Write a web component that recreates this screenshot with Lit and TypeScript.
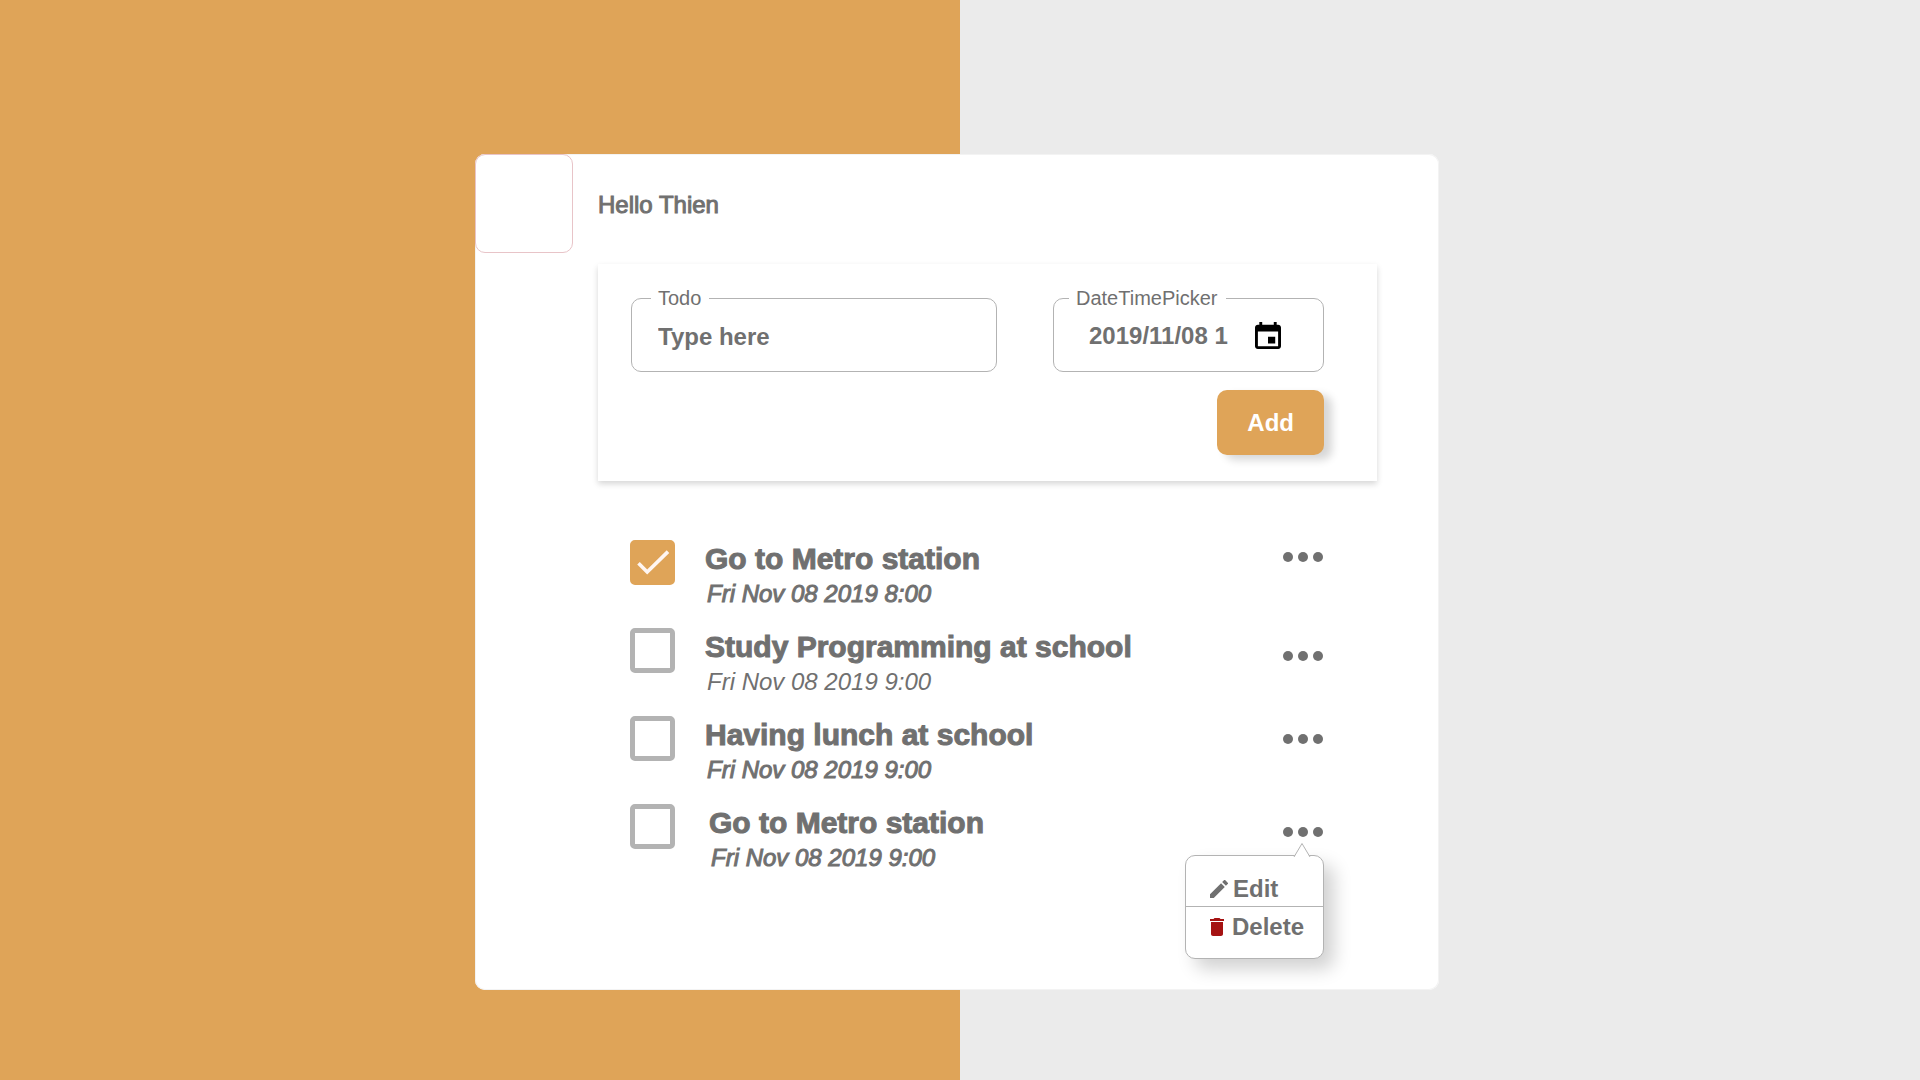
import { LitElement, html, css, svg, nothing } from "lit";
import { customElement, property, state } from "lit/decorators.js";
import { classMap } from "lit/directives/class-map.js";

interface Task {
  id: number;
  title: string;
  when: string;
  done: boolean;
  light?: boolean;
  menuAlign: "start" | "center" | "end";
}

const calendarPath = svg`<path d="M17 12h-5v5h5v-5zM16 1v2H8V1H6v2H5c-1.11 0-1.99.9-1.99 2L3 19c0 1.1.89 2 2 2h14c1.1 0 2-.9 2-2V5c0-1.1-.9-2-2-2h-1V1h-2zm3 18H5V8h14v11z"></path>`;
const pencilPath = svg`<path d="M3 17.25V21h3.75L17.81 9.94l-3.75-3.75L3 17.25zM20.71 7.04a1 1 0 0 0 0-1.41l-2.34-2.34a1 1 0 0 0-1.41 0l-1.83 1.83 3.75 3.75 1.83-1.83z"></path>`;
const trashPath = svg`<path d="M6 19c0 1.1.9 2 2 2h8c1.1 0 2-.9 2-2V7H6v12zM19 4h-3.5l-1-1h-5l-1 1H5v2h14V4z"></path>`;

@customElement("todo-menu")
export class TodoMenu extends LitElement {
  static styles = css`
    :host {
      display: block;
      color: #707070;
      font: bold 24px/28px "Liberation Sans", Arial, sans-serif;
    }
    .menu {
      position: relative;
      box-sizing: border-box;
      min-width: 139px;
      border: 1px solid #b3b3b3;
      border-radius: 10px;
      background: #fff;
      box-shadow: 10px 10px 18px rgba(0, 0, 0, 0.18);
    }
    .arrow {
      position: absolute;
      right: 12px;
      bottom: 100%;
      width: 18px;
      height: 14px;
      margin-bottom: -1px;
    }
    .item {
      display: flex;
      align-items: center;
      width: 100%;
      box-sizing: border-box;
      border: 0;
      background: none;
      color: inherit;
      font: inherit;
      text-align: left;
      cursor: pointer;
    }
    .edit {
      gap: 5px;
      padding: 19px 11px 3px 24px;
      border-bottom: 1px solid #b3b3b3;
    }
    .delete {
      gap: 8px;
      padding: 6px 11px 17px 24px;
    }
    .pencil {
      width: 18px;
      height: 18px;
      fill: #707070;
    }
    .trash {
      width: 14px;
      height: 18px;
      fill: #a51212;
    }
  `;

  render() {
    return html`
      <div class="menu">
        <svg class="arrow" viewBox="0 0 18 14" aria-hidden="true">
          <path d="M1 14 9 0.5 17 14" fill="#fff" stroke="#b3b3b3"></path>
        </svg>
        <button class="item edit" type="button">
          <svg class="pencil" viewBox="3 3 18 18" aria-hidden="true">${pencilPath}</svg>
          Edit
        </button>
        <button class="item delete" type="button">
          <svg class="trash" viewBox="5 3 14 18" aria-hidden="true">${trashPath}</svg>
          Delete
        </button>
      </div>
    `;
  }
}

@customElement("todo-item")
export class TodoItem extends LitElement {
  @property({ attribute: false }) task!: Task;
  @property({ type: Boolean }) open = false;

  static styles = css`
    :host {
      display: block;
      color: #707070;
      font-family: "Liberation Sans", Arial, sans-serif;
    }
    .row {
      display: flex;
      align-items: flex-start;
      gap: 30px;
    }
    .row.open {
      gap: 34px;
    }
    .check {
      display: grid;
      flex: none;
    }
    .box,
    .tick {
      grid-area: 1 / 1;
      width: 45px;
      height: 45px;
    }
    .box {
      appearance: none;
      box-sizing: border-box;
      margin: 0;
      border: 5px solid #b3b3b3;
      border-radius: 5px;
      background: #fff;
      cursor: pointer;
    }
    .box:checked {
      border-color: #dfa458;
      background: #dfa458;
    }
    .tick {
      pointer-events: none;
      fill: none;
      stroke: #fff6f2;
      stroke-width: 3.6;
    }
    .text {
      display: flex;
      flex-direction: column;
      gap: 2px;
      flex: 1;
    }
    .title {
      font-size: 30px;
      line-height: 38px;
      font-weight: bold;
      -webkit-text-stroke: 1px #707070;
      cursor: pointer;
    }
    .when {
      padding-left: 2px;
      font-size: 24px;
      line-height: 28px;
      font-style: italic;
      -webkit-text-stroke: 1px #707070;
    }
    .when.light {
      -webkit-text-stroke: 0;
    }
    .actions {
      display: flex;
      height: 45px;
    }
    .actions.start {
      align-items: flex-start;
    }
    .actions.center {
      align-items: center;
    }
    .actions.end {
      align-items: flex-end;
    }
    .anchor {
      position: relative;
    }
    .more {
      display: flex;
      align-items: center;
      height: 34px;
      padding: 0 1px 0 0;
      border: 0;
      background: none;
      cursor: pointer;
    }
    .dots {
      width: 40px;
      height: 10px;
      fill: #707070;
    }
    .popup {
      position: absolute;
      top: calc(100% + 6px);
      right: 0;
      z-index: 1;
    }
  `;

  private toggleMenu() {
    this.dispatchEvent(new CustomEvent("menu-toggle", { bubbles: true, composed: true }));
  }

  private toggleDone() {
    this.dispatchEvent(new CustomEvent("done-toggle", { bubbles: true, composed: true }));
  }

  render() {
    const t = this.task;
    return html`
      <div class=${classMap({ row: true, open: this.open })}>
        <span class="check">
          <input class="box" id="done" type="checkbox" .checked=${t.done} @change=${this.toggleDone} />
          ${t.done
            ? html`<svg class="tick" viewBox="0 0 45 45" aria-hidden="true">
                <path d="M8.5 23.2 17.2 32 38 11.6"></path>
              </svg>`
            : nothing}
        </span>
        <div class="text">
          <label class="title" for="done">${t.title}</label>
          <time class=${classMap({ when: true, light: !!t.light })}>${t.when}</time>
        </div>
        <div class="actions ${t.menuAlign}">
          <div class="anchor">
            <button class="more" type="button" aria-label="More" @click=${this.toggleMenu}>
              <svg class="dots" viewBox="0 0 40 10" aria-hidden="true">
                <circle cx="5" cy="5" r="5"></circle>
                <circle cx="20" cy="5" r="5"></circle>
                <circle cx="35" cy="5" r="5"></circle>
              </svg>
            </button>
            ${this.open ? html`<todo-menu class="popup"></todo-menu>` : nothing}
          </div>
        </div>
      </div>
    `;
  }
}

@customElement("app-root")
export class AppRoot extends LitElement {
  @state() private openId = 4;
  @state() private tasks: Task[] = [
    { id: 1, title: "Go to Metro station", when: "Fri Nov 08 2019 8:00", done: true, menuAlign: "start" },
    { id: 2, title: "Study Programming at school", when: "Fri Nov 08 2019 9:00", done: false, light: true, menuAlign: "end" },
    { id: 3, title: "Having lunch at school", when: "Fri Nov 08 2019 9:00", done: false, menuAlign: "center" },
    { id: 4, title: "Go to Metro station", when: "Fri Nov 08 2019 9:00", done: false, menuAlign: "end" },
  ];

  static styles = css`
    :host {
      display: block;
      color: #707070;
      font-family: "Liberation Sans", Arial, sans-serif;
    }
    .page {
      display: grid;
      grid-template-columns: 475fr 964fr 481fr;
      align-items: start;
      box-sizing: border-box;
      min-height: 100vh;
      padding: 154px 0 88px;
      background: linear-gradient(to right, #dfa458 50%, #ebebeb 50%);
    }
    .card {
      grid-column: 2;
      display: grid;
      grid-template-columns: 98px minmax(0, 1fr);
      align-items: start;
      column-gap: 25px;
      padding-bottom: 118px;
      border-radius: 10px;
      background: #fff;
      box-shadow: inset 0 0 0 1px #f3f3f3;
    }
    .avatar {
      box-sizing: border-box;
      height: 99px;
      border: 1px solid #e8c4c8;
      border-radius: 10px;
    }
    .content {
      display: flex;
      flex-direction: column;
      padding: 37px 62px 0 0;
    }
    .hello {
      margin: 0 0 45px;
      font-size: 24px;
      line-height: 28px;
      font-weight: normal;
      -webkit-text-stroke: 1px #707070;
    }
    .panel {
      display: grid;
      grid-template-columns: 366fr 271fr;
      gap: 18px 56px;
      padding: 22px 53px 26px 33px;
      background: #fff;
      box-shadow: 0 3px 6px rgba(0, 0, 0, 0.16);
    }
    .field {
      display: flex;
      align-items: center;
      min-width: 0;
      margin: 0;
      padding: 13px 26px 20px;
      border: 1px solid #b3b3b3;
      border-radius: 10px;
    }
    .legend {
      margin-left: -7px;
      padding: 0 8px 0 7px;
      font-size: 20px;
      line-height: 24px;
    }
    .date .legend {
      margin-left: -20px;
    }
    .date {
      padding: 12px 42px 21px 35px;
    }
    .input {
      flex: 1;
      min-width: 0;
      height: 28px;
      padding: 0;
      border: 0;
      outline: 0;
      background: none;
      color: #707070;
      font: bold 24px/28px "Liberation Sans", Arial, sans-serif;
    }
    .input::placeholder {
      color: #707070;
      opacity: 1;
    }
    .picker {
      display: flex;
      flex: none;
      padding: 0 0 1px;
      border: 0;
      background: none;
      cursor: pointer;
    }
    .calendar {
      width: 26px;
      height: 27px;
      fill: #000;
    }
    .add {
      grid-column: 2;
      justify-self: end;
      padding: 19px 30px 18px;
      border: 0;
      border-radius: 10px;
      background: #dfa458;
      color: #fff;
      font: bold 24px/28px "Liberation Sans", Arial, sans-serif;
      box-shadow: 8px 5px 8px rgba(0, 0, 0, 0.16);
      cursor: pointer;
    }
    .list {
      display: flex;
      flex-direction: column;
      gap: 20px;
      margin: 59px 0 0;
      padding: 0 53px 0 32px;
      list-style: none;
    }
  `;

  private toggleDone(id: number) {
    this.tasks = this.tasks.map((t) => (t.id === id ? { ...t, done: !t.done } : t));
  }

  render() {
    return html`
      <main class="page">
        <section class="card">
          <div class="avatar"></div>
          <div class="content">
            <h1 class="hello">Hello Thien</h1>
            <form class="panel" @submit=${(e: Event) => e.preventDefault()}>
              <fieldset class="field">
                <legend class="legend"><label for="todo">Todo</label></legend>
                <input class="input" id="todo" type="text" placeholder="Type here" />
              </fieldset>
              <fieldset class="field date">
                <legend class="legend"><label for="date">DateTimePicker</label></legend>
                <input class="input" id="date" type="text" value="2019/11/08 1" />
                <button class="picker" type="button" aria-label="DateTimePicker">
                  <svg class="calendar" viewBox="3 1 18 20" preserveAspectRatio="none" aria-hidden="true">
                    ${calendarPath}
                  </svg>
                </button>
              </fieldset>
              <button class="add" type="submit">Add</button>
            </form>
            <ul class="list">
              ${this.tasks.map(
                (t) => html`<li>
                  <todo-item
                    .task=${t}
                    .open=${t.id === this.openId}
                    @menu-toggle=${() => (this.openId = this.openId === t.id ? 0 : t.id)}
                    @done-toggle=${() => this.toggleDone(t.id)}
                  ></todo-item>
                </li>`
              )}
            </ul>
          </div>
        </section>
      </main>
    `;
  }
}
